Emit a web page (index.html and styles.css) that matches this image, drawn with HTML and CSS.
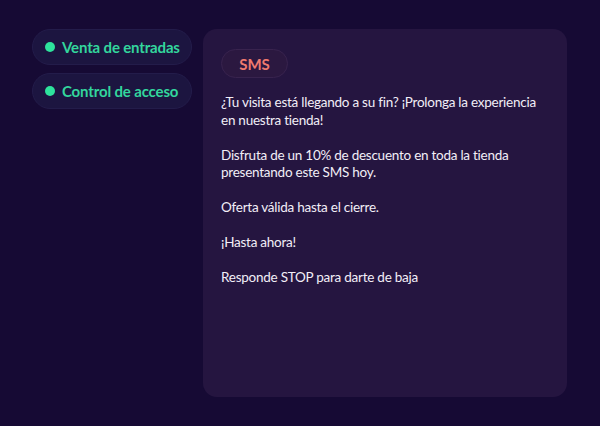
FILE: index.html
```html
<!DOCTYPE html>
<html lang="es">
<head>
<meta charset="utf-8">
<link rel="stylesheet" href="styles.css">
</head>
<body>
<div class="layout">
  <nav class="nav">
    <div class="pill"><span class="dot"></span><span class="pill-label">Venta de entradas</span></div>
    <div class="pill"><span class="dot"></span><span class="pill-label">Control de acceso</span></div>
  </nav>
  <section class="panel">
    <div class="badge">SMS</div>
    <div class="message">
      <p>¿Tu visita está llegando a su fin? ¡Prolonga la experiencia en nuestra tienda!</p>
      <p>Disfruta de un 10% de descuento en toda la tienda presentando este SMS hoy.</p>
      <p>Oferta válida hasta el cierre.</p>
      <p>¡Hasta ahora!</p>
      <p>Responde STOP para darte de baja</p>
    </div>
  </section>
</div>
</body>
</html>
```
FILE: styles.css
```css
html, body {
  margin: 0;
  padding: 0;
  background: #160a34;
}
body {
  width: 600px;
  height: 426px;
  font-family: "Lato", "Noto Sans", sans-serif;
  overflow: hidden;
}
.layout {
  display: flex;
  gap: 11px;
  padding: 29px 0 0 32px;
}
.nav {
  display: flex;
  flex-direction: column;
  gap: 8px;
  width: 160px;
}
.pill {
  display: flex;
  align-items: center;
  gap: 7px;
  height: 36px;
  box-sizing: border-box;
  padding-left: 12px;
  border-radius: 18px;
  background: #1c1540;
  border: 1px solid #231c4a;
}
.dot {
  width: 10px;
  height: 10px;
  border-radius: 50%;
  background: #2ee39c;
  flex: none;
}
.pill-label {
  color: #33d69d;
  font-weight: 700;
  font-size: 15px;
  letter-spacing: -0.15px;
}
.panel {
  width: 364px;
  height: 368px;
  box-sizing: border-box;
  border-radius: 14px;
  background: #251540;
  padding: 20px 18px;
}
.badge {
  display: inline-flex;
  align-items: center;
  justify-content: center;
  width: 67px;
  height: 29px;
  box-sizing: border-box;
  border-radius: 15px;
  background: #2b1840;
  border: 1px solid #38234e;
  color: #f07a6e;
  font-weight: 700;
  font-size: 15px;
}
.message {
  margin-top: 16px;
  color: #f2eef7;
  font-size: 13.5px;
  letter-spacing: -0.25px;
  line-height: 17.5px;
}
.message p {
  margin: 0 0 17.5px 0;
}
```
